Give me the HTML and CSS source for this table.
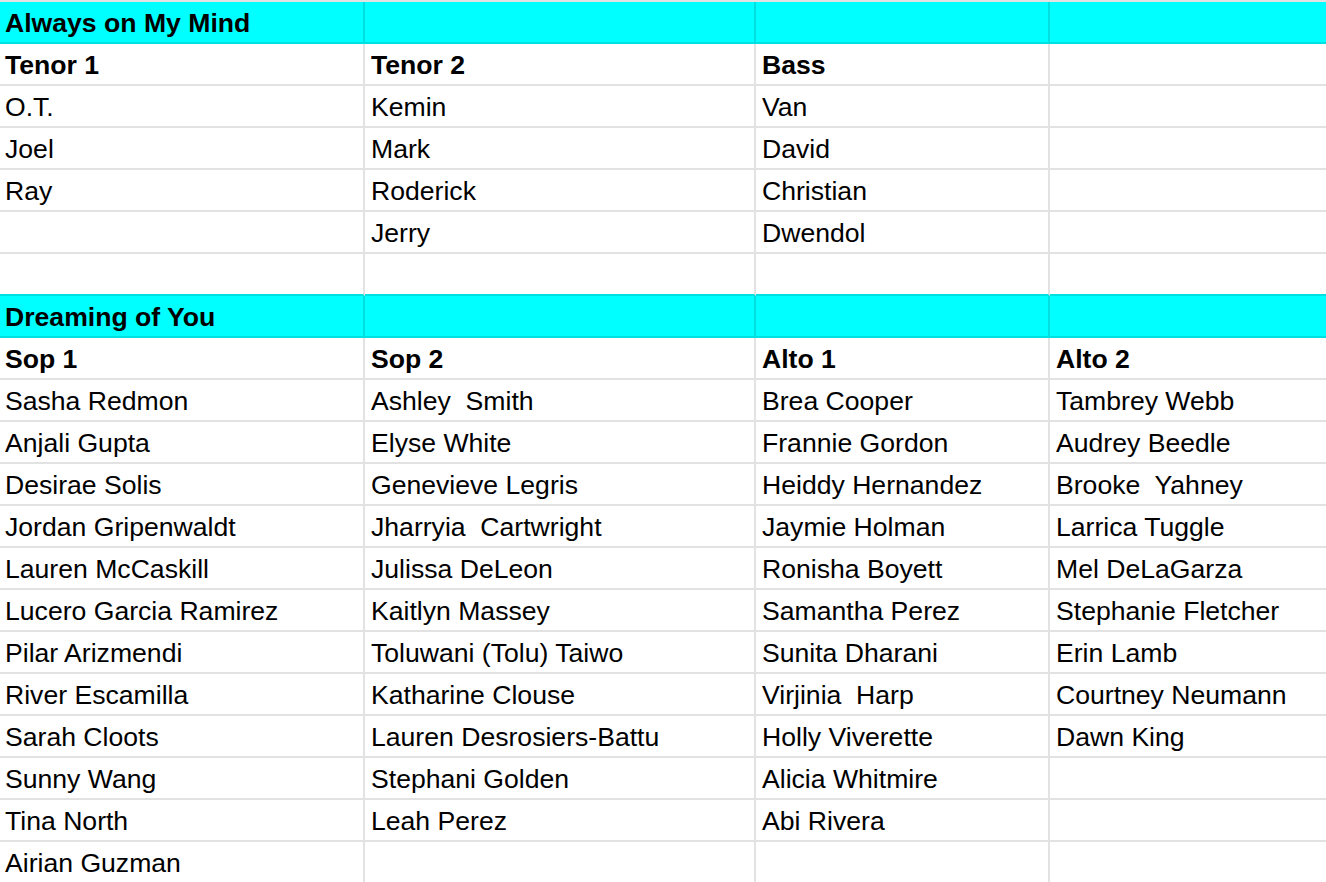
FILE: index.html
```html
<!DOCTYPE html>
<html>
<head>
<meta charset="utf-8">
<link rel="stylesheet" href="styles.css">
</head>
<body>
<div class="sheet">
  <div class="c band">Always on My Mind</div><div class="c band"></div><div class="c band"></div><div class="c band"></div>
  <div class="c hd">Tenor 1</div><div class="c hd">Tenor 2</div><div class="c hd">Bass</div><div class="c"></div>
  <div class="c">O.T.</div><div class="c">Kemin</div><div class="c">Van</div><div class="c"></div>
  <div class="c">Joel</div><div class="c">Mark</div><div class="c">David</div><div class="c"></div>
  <div class="c">Ray</div><div class="c">Roderick</div><div class="c">Christian</div><div class="c"></div>
  <div class="c"></div><div class="c">Jerry</div><div class="c">Dwendol</div><div class="c"></div>
  <div class="c pre"></div><div class="c pre"></div><div class="c pre"></div><div class="c pre"></div>
  <div class="c band">Dreaming of You</div><div class="c band"></div><div class="c band"></div><div class="c band"></div>
  <div class="c hd">Sop 1</div><div class="c hd">Sop 2</div><div class="c hd">Alto 1</div><div class="c hd">Alto 2</div>
  <div class="c">Sasha Redmon</div><div class="c">Ashley  Smith</div><div class="c">Brea Cooper</div><div class="c">Tambrey Webb</div>
  <div class="c">Anjali Gupta</div><div class="c">Elyse White</div><div class="c">Frannie Gordon</div><div class="c">Audrey Beedle</div>
  <div class="c">Desirae Solis</div><div class="c">Genevieve Legris</div><div class="c">Heiddy Hernandez</div><div class="c">Brooke  Yahney</div>
  <div class="c">Jordan Gripenwaldt</div><div class="c">Jharryia  Cartwright</div><div class="c">Jaymie Holman</div><div class="c">Larrica Tuggle</div>
  <div class="c">Lauren McCaskill</div><div class="c">Julissa DeLeon</div><div class="c">Ronisha Boyett</div><div class="c">Mel DeLaGarza</div>
  <div class="c">Lucero Garcia Ramirez</div><div class="c">Kaitlyn Massey</div><div class="c">Samantha Perez</div><div class="c">Stephanie Fletcher</div>
  <div class="c">Pilar Arizmendi</div><div class="c">Toluwani (Tolu) Taiwo</div><div class="c">Sunita Dharani</div><div class="c">Erin Lamb</div>
  <div class="c">River Escamilla</div><div class="c">Katharine Clouse</div><div class="c">Virjinia  Harp</div><div class="c">Courtney Neumann</div>
  <div class="c">Sarah Cloots</div><div class="c">Lauren Desrosiers-Battu</div><div class="c">Holly Viverette</div><div class="c">Dawn King</div>
  <div class="c">Sunny Wang</div><div class="c">Stephani Golden</div><div class="c">Alicia Whitmire</div><div class="c"></div>
  <div class="c">Tina North</div><div class="c">Leah Perez</div><div class="c">Abi Rivera</div><div class="c"></div>
  <div class="c">Airian Guzman</div><div class="c"></div><div class="c"></div><div class="c"></div>
</div>
</body>
</html>
```
FILE: styles.css
```css
html, body {
  margin: 0;
  padding: 0;
  background: #ffffff;
  overflow: hidden;
  width: 1326px;
  height: 882px;
}

.sheet {
  display: grid;
  grid-template-columns: 365px 391px 294px 278px;
  grid-auto-rows: 42px;
  border-top: 2px solid #e2e2e2;
  font-family: "Liberation Sans", Arial, sans-serif;
  font-size: 26.6px;
  color: #000000;
}

.c {
  box-sizing: border-box;
  height: 42px;
  border-right: 2px solid #e2e2e2;
  border-bottom: 2px solid #e2e2e2;
  padding-left: 6px;
  padding-top: 2px;
  line-height: 38px;
  white-space: pre;
  overflow: hidden;
}

.c:nth-child(4n+1) {
  padding-left: 5px;
}

.hd {
  font-weight: bold;
}

.band {
  background: #00ffff;
  font-weight: bold;
  border-right-color: #00e0e0;
  border-bottom-color: #00e0e0;
}

.pre {
  border-bottom-color: #00e0e0;
}
```
